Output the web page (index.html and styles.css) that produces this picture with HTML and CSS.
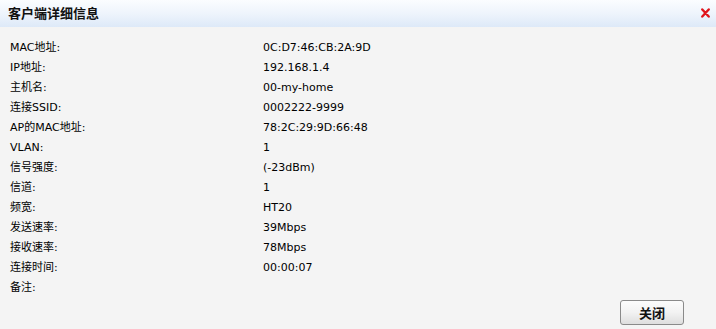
FILE: index.html
```html
<!DOCTYPE html>
<html lang="zh">
<head>
<meta charset="utf-8">
<link rel="stylesheet" href="styles.css">
</head>
<body>
<div class="dialog">
  <div class="header">
    <span class="title">客户端详细信息</span>
    <span class="close" aria-label="关闭">
      <svg width="9" height="10" viewBox="0 0 9 10">
        <path d="M1.3 1.5 L7.7 8.5 M7.7 1.5 L1.3 8.5" stroke="#e0141b" stroke-width="2.4" stroke-linecap="round"/>
      </svg>
    </span>
  </div>
  <div class="info">
    <div class="label">MAC地址:</div><div class="value">0C:D7:46:CB:2A:9D</div>
    <div class="label">IP地址:</div><div class="value">192.168.1.4</div>
    <div class="label">主机名:</div><div class="value">00-my-home</div>
    <div class="label">连接SSID:</div><div class="value">0002222-9999</div>
    <div class="label">AP的MAC地址:</div><div class="value">78:2C:29:9D:66:48</div>
    <div class="label">VLAN:</div><div class="value">1</div>
    <div class="label">信号强度:</div><div class="value">(-23dBm)</div>
    <div class="label">信道:</div><div class="value">1</div>
    <div class="label">频宽:</div><div class="value">HT20</div>
    <div class="label">发送速率:</div><div class="value">39Mbps</div>
    <div class="label">接收速率:</div><div class="value">78Mbps</div>
    <div class="label">连接时间:</div><div class="value">00:00:07</div>
    <div class="label">备注:</div><div class="value"></div>
  </div>
  <div class="footer">
    <button class="btn">关闭</button>
  </div>
</div>
</body>
</html>
```

FILE: styles.css
```css
html, body {
  margin: 0;
  padding: 0;
  background: #f4f4f4;
}
body {
  font-family: "DejaVu Sans", "Noto Sans CJK SC", sans-serif;
  font-size: 11px;
  color: #000;
}
.dialog {
  width: 716px;
  height: 329px;
  display: flex;
  flex-direction: column;
}
.header {
  height: 27px;
  background: linear-gradient(to bottom, #fbfdff 0%, #eef4fc 50%, #dde9f8 100%);
  display: flex;
  align-items: center;
  justify-content: space-between;
  padding: 0 6px 0 8px;
  box-sizing: border-box;
}
.title {
  font-family: "Noto Sans CJK SC", sans-serif;
  font-weight: bold;
  font-size: 13px;
  color: #111;
  margin-top: -2px;
}
.close {
  display: flex;
  margin-top: -2px;
}
.info {
  display: grid;
  grid-template-columns: 253px 1fr;
  grid-auto-rows: 20px;
  padding: 11px 0 0 10px;
  align-items: center;
}
.label, .value {
  line-height: 20px;
  white-space: nowrap;
}
.footer {
  display: flex;
  justify-content: flex-end;
  padding: 0 32px 0 0;
  margin-top: auto;
  margin-bottom: 4px;
}
.btn {
  width: 64px;
  height: 25px;
  border: 1px solid #8a8a8a;
  border-radius: 3px;
  background: linear-gradient(to bottom, #fcfcfc 0%, #f2f2f2 50%, #dedede 100%);
  font-family: "Noto Sans CJK SC", sans-serif;
  font-weight: bold;
  font-size: 13px;
  color: #111;
  padding: 0;
  line-height: 22px;
}
```
